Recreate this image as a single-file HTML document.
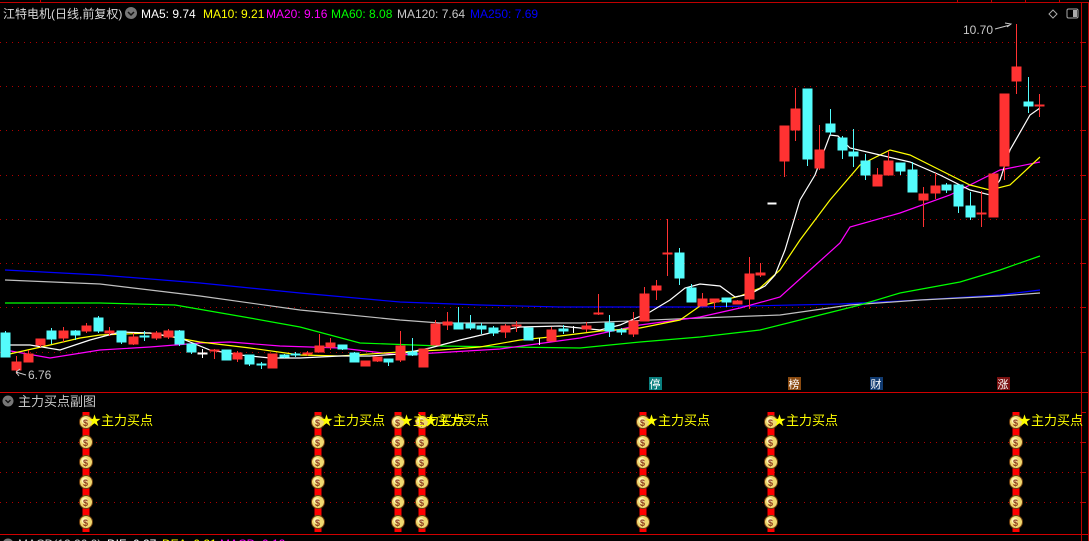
<!DOCTYPE html>
<html><head><meta charset="utf-8"><style>
html,body{margin:0;padding:0;background:#000;width:1089px;height:541px;overflow:hidden}
svg{display:block}
text{font-family:"Liberation Sans","Noto Sans CJK SC",sans-serif}
</style></head><body>
<svg width="1089" height="541" viewBox="0 0 1089 541" xmlns="http://www.w3.org/2000/svg">
<rect width="1089" height="541" fill="#000"/>
<line x1="0" y1="2.5" x2="1089" y2="2.5" stroke="#c00000"/>
<g stroke="#c00000"><line x1="40.5" y1="0" x2="40.5" y2="3"/><line x1="957.5" y1="0" x2="957.5" y2="3"/><line x1="991.5" y1="0" x2="991.5" y2="3"/><line x1="1025.5" y1="0" x2="1025.5" y2="3"/><line x1="1059.5" y1="0" x2="1059.5" y2="3"/></g>
<line x1="0" y1="392.5" x2="1089" y2="392.5" stroke="#d00000"/>
<line x1="0" y1="534.5" x2="1089" y2="534.5" stroke="#d00000"/>
<line x1="1081.5" y1="3" x2="1081.5" y2="541" stroke="#c00000"/>
<line x1="1088.5" y1="3" x2="1088.5" y2="541" stroke="#c00000"/>
<g stroke="#c00000">
<line x1="1081" y1="42.5" x2="1086" y2="42.5"/><line x1="1081" y1="86.5" x2="1086" y2="86.5"/><line x1="1081" y1="130.5" x2="1086" y2="130.5"/><line x1="1081" y1="175.5" x2="1086" y2="175.5"/><line x1="1081" y1="219.5" x2="1086" y2="219.5"/><line x1="1081" y1="263.5" x2="1086" y2="263.5"/><line x1="1081" y1="307.5" x2="1086" y2="307.5"/><line x1="1081" y1="352.5" x2="1086" y2="352.5"/>
<line x1="1081" y1="412.5" x2="1086" y2="412.5"/><line x1="1081" y1="442.5" x2="1086" y2="442.5"/><line x1="1081" y1="472.5" x2="1086" y2="472.5"/><line x1="1081" y1="502.5" x2="1086" y2="502.5"/>
</g>
<g stroke="#b00000" stroke-dasharray="1,5">
<line x1="0" y1="42.5" x2="1081" y2="42.5"/><line x1="0" y1="86.5" x2="1081" y2="86.5"/><line x1="0" y1="130.5" x2="1081" y2="130.5"/><line x1="0" y1="175.5" x2="1081" y2="175.5"/><line x1="0" y1="219.5" x2="1081" y2="219.5"/><line x1="0" y1="263.5" x2="1081" y2="263.5"/><line x1="0" y1="307.5" x2="1081" y2="307.5"/><line x1="0" y1="352.5" x2="1081" y2="352.5"/>
<line x1="0" y1="442.5" x2="1081" y2="442.5"/><line x1="0" y1="472.5" x2="1081" y2="472.5"/><line x1="0" y1="502.5" x2="1081" y2="502.5"/>
</g>
<text x="3" y="18" font-size="12" fill="#d8d8d8">江特电机(日线,前复权)</text>
<circle cx="131" cy="13" r="6" fill="#777"/><path d="M128 12 l3 3 l3 -3" stroke="#111" stroke-width="1.5" fill="none"/>
<g font-size="12">
<text x="141" y="18" fill="#fff">MA5: 9.74</text>
<text x="203" y="18" fill="#ffff00">MA10: 9.21</text>
<text x="266" y="18" fill="#ff00ff">MA20: 9.16</text>
<text x="331" y="18" fill="#00ff00">MA60: 8.08</text>
<text x="397" y="18" fill="#c8c8c8">MA120: 7.64</text>
<text x="470" y="18" fill="#0000ff">MA250: 7.69</text>
</g>
<path d="M1053 10 l4 4 l-4 4 l-4 -4 z" stroke="#aaa" fill="none"/>
<rect x="1067" y="9" width="11" height="9" rx="1.5" stroke="#aaa" fill="none"/><rect x="1073" y="10" width="4" height="7" fill="#aaa"/>
<g fill="none" stroke-width="1.2">
<polyline stroke="#0000ff" points="5,270 100,275 200,283 300,293 400,302 480,305 560,307 700,307 840,304 920,300 1000,295 1040,290"/>
<polyline stroke="#c0c0c0" points="5,280 100,284 200,296 300,310 400,320 440,323 580,323 700,318 780,315 850,305 920,300 1000,296 1040,293"/>
<polyline stroke="#00ff00" points="5,303 100,303 175,305 250,318 300,327 360,343 440,346 580,348 640,342 700,337 760,330 800,320 860,305 900,293 960,282 1000,270 1040,256"/>
<polyline stroke="#ff00ff" points="5,350 50,358 100,350 150,347 200,343 230,342 280,346 340,348 400,355 450,352 500,349 580,338 640,325 700,317 740,308 780,297 810,270 840,243 850,227 900,213 950,195 1000,170 1040,162"/>
<polyline stroke="#ffff00" points="5,355 50,345 80,338 100,335 150,333 200,342 250,348 300,355 340,356 400,352 440,350 480,347 520,340 560,336 600,331 640,328 680,320 700,306 740,296 760,288 780,270 800,240 830,200 860,165 890,150 910,155 940,170 970,185 990,190 1010,185 1040,157"/>
<polyline stroke="#ffffff" points="5,345 30,345 60,350 90,340 120,332 150,333 180,338 210,350 240,355 270,358 300,358 340,356 370,356 400,354 430,348 460,340 490,333 520,327 560,326 600,330 620,325 650,312 670,300 685,288 700,284 720,286 735,297 750,294 765,286 775,275 785,250 800,200 815,175 830,135 838,136 850,148 880,155 910,162 940,175 970,190 990,195 1000,180 1010,150 1030,115 1040,108"/>
</g>
<g stroke="#54fcfc" fill="#54fcfc">
<line x1="5.5" y1="331" x2="5.5" y2="357"/><rect x="1" y="333" width="9" height="24"/>
<line x1="51.5" y1="328" x2="51.5" y2="344"/><rect x="47" y="331" width="9" height="8"/>
<line x1="75.5" y1="330" x2="75.5" y2="340"/><rect x="71" y="331" width="9" height="4"/>
<line x1="98.5" y1="316" x2="98.5" y2="333"/><rect x="94" y="318" width="9" height="13"/>
<line x1="121.5" y1="331" x2="121.5" y2="344"/><rect x="117" y="331" width="9" height="11"/>
<line x1="144.5" y1="331" x2="144.5" y2="341"/><rect x="140" y="336" width="9" height="1"/>
<line x1="179.5" y1="330" x2="179.5" y2="346"/><rect x="175" y="331" width="9" height="13"/>
<line x1="191.5" y1="344" x2="191.5" y2="354"/><rect x="187" y="344" width="9" height="8"/>
<line x1="226.5" y1="350" x2="226.5" y2="360"/><rect x="222" y="350" width="9" height="10"/>
<line x1="249.5" y1="355" x2="249.5" y2="366"/><rect x="245" y="355" width="9" height="9"/>
<line x1="261.5" y1="362" x2="261.5" y2="369"/><rect x="257" y="364" width="9" height="1"/>
<line x1="284.5" y1="354" x2="284.5" y2="358"/><rect x="280" y="355" width="9" height="2"/>
<line x1="295.5" y1="352" x2="295.5" y2="357"/><rect x="291" y="354" width="9" height="1"/>
<line x1="342.5" y1="345" x2="342.5" y2="350"/><rect x="338" y="345" width="9" height="4"/>
<line x1="354.5" y1="352" x2="354.5" y2="362"/><rect x="350" y="353" width="9" height="9"/>
<line x1="388.5" y1="359" x2="388.5" y2="366"/><rect x="384" y="359" width="9" height="3"/>
<line x1="412.5" y1="338" x2="412.5" y2="356"/><rect x="408" y="352" width="9" height="3"/>
<line x1="458.5" y1="307" x2="458.5" y2="329"/><rect x="454" y="323" width="9" height="6"/>
<line x1="470.5" y1="315" x2="470.5" y2="330"/><rect x="466" y="324" width="9" height="4"/>
<line x1="481.5" y1="323" x2="481.5" y2="334"/><rect x="477" y="326" width="9" height="3"/>
<line x1="493.5" y1="326" x2="493.5" y2="336"/><rect x="489" y="328" width="9" height="5"/>
<line x1="528.5" y1="328" x2="528.5" y2="340"/><rect x="524" y="328" width="9" height="12"/>
<line x1="563.5" y1="325" x2="563.5" y2="334"/><rect x="559" y="329" width="9" height="2"/>
<line x1="609.5" y1="315" x2="609.5" y2="337"/><rect x="605" y="323" width="9" height="8"/>
<line x1="621.5" y1="328" x2="621.5" y2="335"/><rect x="617" y="330" width="9" height="2"/>
<line x1="679.5" y1="248" x2="679.5" y2="285"/><rect x="675" y="253" width="9" height="25"/>
<line x1="691.5" y1="284" x2="691.5" y2="302"/><rect x="687" y="288" width="9" height="14"/>
<line x1="726.5" y1="298" x2="726.5" y2="307"/><rect x="722" y="298" width="9" height="4"/>
<line x1="807.5" y1="89" x2="807.5" y2="166"/><rect x="803" y="89" width="9" height="70"/>
<line x1="830.5" y1="109" x2="830.5" y2="135"/><rect x="826" y="124" width="9" height="8"/>
<line x1="842.5" y1="136" x2="842.5" y2="159"/><rect x="838" y="138" width="9" height="12"/>
<line x1="853.5" y1="129" x2="853.5" y2="167"/><rect x="849" y="152" width="9" height="4"/>
<line x1="865.5" y1="154" x2="865.5" y2="180"/><rect x="861" y="161" width="9" height="14"/>
<line x1="900.5" y1="163" x2="900.5" y2="175"/><rect x="896" y="163" width="9" height="8"/>
<line x1="912.5" y1="162" x2="912.5" y2="192"/><rect x="908" y="170" width="9" height="22"/>
<line x1="946.5" y1="183" x2="946.5" y2="193"/><rect x="942" y="185" width="9" height="5"/>
<line x1="958.5" y1="185" x2="958.5" y2="213"/><rect x="954" y="185" width="9" height="21"/>
<line x1="970.5" y1="192" x2="970.5" y2="220"/><rect x="966" y="206" width="9" height="11"/>
<line x1="1028.5" y1="77" x2="1028.5" y2="113"/><rect x="1024" y="102" width="9" height="4"/>
</g>
<g stroke="#ff3232" fill="#ff3232">
<line x1="16.5" y1="356" x2="16.5" y2="374"/><rect x="12" y="362" width="9" height="8"/>
<line x1="28.5" y1="350" x2="28.5" y2="362"/><rect x="24" y="354" width="9" height="8"/>
<line x1="40.5" y1="339" x2="40.5" y2="347"/><rect x="36" y="339" width="9" height="6"/>
<line x1="63.5" y1="327" x2="63.5" y2="342"/><rect x="59" y="331" width="9" height="7"/>
<line x1="86.5" y1="323" x2="86.5" y2="333"/><rect x="82" y="326" width="9" height="5"/>
<line x1="109.5" y1="327" x2="109.5" y2="336"/><rect x="105" y="331" width="9" height="2"/>
<line x1="133.5" y1="333" x2="133.5" y2="345"/><rect x="129" y="337" width="9" height="7"/>
<line x1="156.5" y1="331" x2="156.5" y2="340"/><rect x="152" y="333" width="9" height="5"/>
<line x1="168.5" y1="329" x2="168.5" y2="339"/><rect x="164" y="331" width="9" height="6"/>
<line x1="214.5" y1="349" x2="214.5" y2="359"/><rect x="210" y="350" width="9" height="1"/>
<line x1="237.5" y1="351" x2="237.5" y2="362"/><rect x="233" y="353" width="9" height="6"/>
<line x1="272.5" y1="354" x2="272.5" y2="368"/><rect x="268" y="354" width="9" height="14"/>
<line x1="307.5" y1="351" x2="307.5" y2="356"/><rect x="303" y="353" width="9" height="1"/>
<line x1="319.5" y1="334" x2="319.5" y2="352"/><rect x="315" y="346" width="9" height="6"/>
<line x1="330.5" y1="338" x2="330.5" y2="350"/><rect x="326" y="343" width="9" height="4"/>
<line x1="365.5" y1="361" x2="365.5" y2="366"/><rect x="361" y="361" width="9" height="5"/>
<line x1="377.5" y1="357" x2="377.5" y2="362"/><rect x="373" y="357" width="9" height="4"/>
<line x1="400.5" y1="331" x2="400.5" y2="362"/><rect x="396" y="346" width="9" height="14"/>
<line x1="423.5" y1="349" x2="423.5" y2="367"/><rect x="419" y="349" width="9" height="18"/>
<line x1="435.5" y1="320" x2="435.5" y2="345"/><rect x="431" y="324" width="9" height="21"/>
<line x1="447.5" y1="312" x2="447.5" y2="330"/><rect x="443" y="322" width="9" height="3"/>
<line x1="505.5" y1="324" x2="505.5" y2="338"/><rect x="501" y="326" width="9" height="6"/>
<line x1="516.5" y1="321" x2="516.5" y2="332"/><rect x="512" y="325" width="9" height="1"/>
<line x1="551.5" y1="327" x2="551.5" y2="341"/><rect x="547" y="330" width="9" height="11"/>
<line x1="586.5" y1="322" x2="586.5" y2="332"/><rect x="582" y="326" width="9" height="3"/>
<line x1="598.5" y1="294" x2="598.5" y2="315"/><rect x="594" y="313" width="9" height="1"/>
<line x1="633.5" y1="312" x2="633.5" y2="337"/><rect x="629" y="321" width="9" height="13"/>
<line x1="644.5" y1="287" x2="644.5" y2="321"/><rect x="640" y="294" width="9" height="27"/>
<line x1="656.5" y1="280" x2="656.5" y2="300"/><rect x="652" y="286" width="9" height="4"/>
<line x1="667.5" y1="219" x2="667.5" y2="276"/><rect x="663" y="253" width="9" height="1"/>
<line x1="702.5" y1="293" x2="702.5" y2="306"/><rect x="698" y="299" width="9" height="7"/>
<line x1="714.5" y1="299" x2="714.5" y2="309"/><rect x="710" y="299" width="9" height="3"/>
<line x1="737.5" y1="300" x2="737.5" y2="304"/><rect x="733" y="301" width="9" height="3"/>
<line x1="749.5" y1="257" x2="749.5" y2="309"/><rect x="745" y="274" width="9" height="25"/>
<line x1="760.5" y1="263" x2="760.5" y2="277"/><rect x="756" y="273" width="9" height="2"/>
<line x1="784.5" y1="126" x2="784.5" y2="177"/><rect x="780" y="126" width="9" height="35"/>
<line x1="795.5" y1="88" x2="795.5" y2="141"/><rect x="791" y="109" width="9" height="21"/>
<line x1="819.5" y1="125" x2="819.5" y2="170"/><rect x="815" y="150" width="9" height="18"/>
<line x1="877.5" y1="168" x2="877.5" y2="186"/><rect x="873" y="175" width="9" height="11"/>
<line x1="888.5" y1="151" x2="888.5" y2="175"/><rect x="884" y="161" width="9" height="14"/>
<line x1="923.5" y1="187" x2="923.5" y2="227"/><rect x="919" y="194" width="9" height="6"/>
<line x1="935.5" y1="173" x2="935.5" y2="199"/><rect x="931" y="186" width="9" height="7"/>
<line x1="981.5" y1="191" x2="981.5" y2="227"/><rect x="977" y="213" width="9" height="1"/>
<line x1="993.5" y1="174" x2="993.5" y2="217"/><rect x="989" y="174" width="9" height="43"/>
<line x1="1004.5" y1="94" x2="1004.5" y2="180"/><rect x="1000" y="94" width="9" height="72"/>
<line x1="1016.5" y1="24" x2="1016.5" y2="94"/><rect x="1012" y="67" width="9" height="14"/>
<line x1="1039.5" y1="94" x2="1039.5" y2="117"/><rect x="1035" y="105" width="9" height="1"/>
</g>
<g stroke="#fff" fill="#fff">
<line x1="202.5" y1="349" x2="202.5" y2="358"/><rect x="198" y="353" width="9" height="1"/>
<line x1="539.5" y1="338" x2="539.5" y2="345"/>
<line x1="573.5" y1="326" x2="573.5" y2="333"/>
<rect x="768" y="203" width="8" height="1"/>
</g>
<text x="963" y="34" font-size="12" fill="#c8c8c8">10.70</text>
<path d="M995 29 L1010 25 M1005 23 L1011 24 L1007 27" stroke="#c8c8c8" fill="none"/>
<text x="28" y="379" font-size="12" fill="#c8c8c8">6.76</text>
<path d="M16 372 L26 375 M16 372 L20 369 M16 372 L19 376" stroke="#c8c8c8" fill="none"/>
<g font-size="11">
<rect x="649" y="377" width="13" height="13" fill="#0a7f7f"/><text x="649.5" y="388" fill="#fff">停</text>
<rect x="788" y="377" width="13" height="13" fill="#8a4a10"/><text x="788.5" y="388" fill="#fff">榜</text>
<rect x="870" y="377" width="13" height="13" fill="#103a70"/><text x="870.5" y="388" fill="#fff">财</text>
<rect x="997" y="377" width="13" height="13" fill="#7a1010"/><text x="997.5" y="388" fill="#fff">涨</text>
</g>
<circle cx="8" cy="401" r="5.5" fill="#777"/><path d="M5.5 400 l2.5 2.5 l2.5 -2.5" stroke="#111" stroke-width="1.3" fill="none"/>
<text x="18" y="406" font-size="13" fill="#c8c8c8">主力买点副图</text>
<defs>
<g id="bag">
<rect x="-3.5" y="-10" width="7" height="20" fill="#ff0000"/>
<path d="M-3 -7 h6 l-1 2 h-4 z" fill="#b07020"/>
<circle cx="0" cy="0" r="6.5" fill="#f0d870" stroke="#704010" stroke-width="1"/>
<circle cx="-1.5" cy="-1.5" r="3" fill="#fff6b0"/>
<text x="-3" y="4" font-size="9" fill="#904020" font-weight="bold">$</text>
</g>
<g id="col">
<use href="#bag" y="422"/><use href="#bag" y="442"/><use href="#bag" y="462"/><use href="#bag" y="482"/><use href="#bag" y="502"/><use href="#bag" y="522"/>
</g>
</defs>
<use href="#col" x="86"/><use href="#col" x="318"/><use href="#col" x="398"/><use href="#col" x="422"/><use href="#col" x="643"/><use href="#col" x="771"/><use href="#col" x="1016"/>
<g font-size="13" fill="#ffff00">
<text x="88" y="425">★主力买点</text>
<text x="320" y="425">★主力买点</text>
<text x="400" y="425">★主力买点</text>
<text x="424" y="425">★主力买点</text>
<text x="645" y="425">★主力买点</text>
<text x="773" y="425">★主力买点</text>
<text x="1018" y="425">★主力买点</text>
</g>
<circle cx="8" cy="544" r="5.5" fill="#777"/>
<g font-size="12">
<text x="18" y="548" fill="#c8c8c8">MACD(12,26,9)</text>
<text x="107" y="548" fill="#fff">DIF: 0.27</text>
<text x="162" y="548" fill="#ffff00">DEA: 0.21</text>
<text x="220" y="548" fill="#ff00ff">MACD: 0.12</text>
</g>
</svg>
</body></html>
